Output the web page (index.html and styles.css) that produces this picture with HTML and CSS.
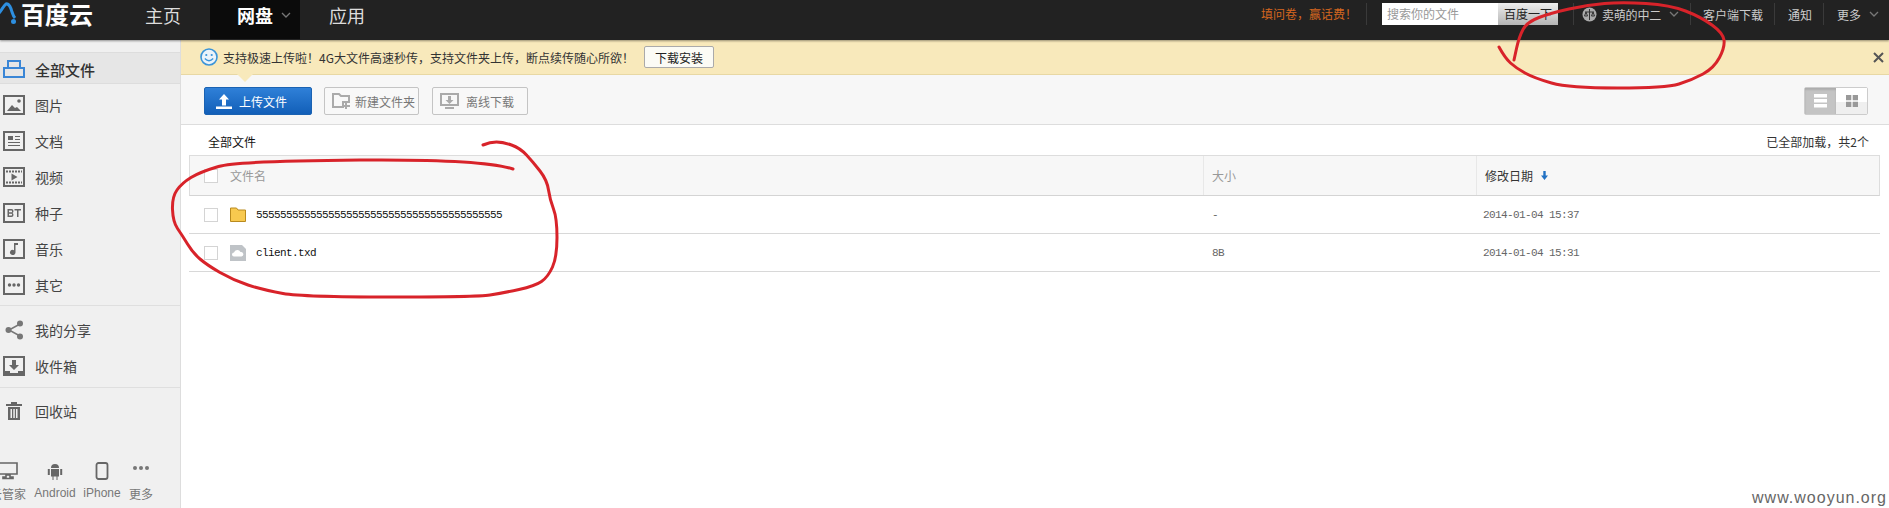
FILE: index.html
```html
<!DOCTYPE html>
<html lang="zh">
<head>
<meta charset="utf-8">
<title>百度云 网盘</title>
<link rel="stylesheet" href="styles.css">
</head>
<body>
<div class="app">
  <header class="topbar">
    <div class="logo">
      <svg class="logo-mark" width="18" height="26" viewBox="0 0 18 26"><path d="M-3 15C1 12 3 6 6 4c3-1 5 4 6 8 1 3 2 5 3 6" fill="none" stroke="#2d8fe0" stroke-width="3"/><circle cx="13.500" cy="21.500" r="2.500" fill="#2d8fe0"/></svg>
      <span class="logo-text">百度云</span>
    </div>
    <nav class="nav">
      <a class="tab tab-home">主页</a>
      <a class="tab tab-active">网盘<svg class="chev" width="10" height="6" viewBox="0 0 10 6"><path d="M1 1l4 4 4-4" fill="none" stroke="#777" stroke-width="1.300"/></svg></a>
      <a class="tab tab-apps">应用</a>
    </nav>
    <div class="top-right">
      <span class="promo">填问卷&#xFF0C;赢话费&#xFF01;</span>
      <div class="search"><span class="search-input">搜索你的文件</span><span class="search-btn">百度一下</span></div>
      <div class="top-item item-user">
        <svg width="15" height="15" viewBox="0 0 15 15"><circle cx="7.500" cy="7.500" r="7" fill="#aaa"/><path d="M7.500 2v11M3 5h9M4 5l-1.500 4h3zM11 5l-1.500 4h3z" fill="none" stroke="#333" stroke-width="1"/></svg>
        <span class="uname">卖萌的中二</span>
        <svg class="chev" width="10" height="6" viewBox="0 0 10 6"><path d="M1 1l4 4 4-4" fill="none" stroke="#777" stroke-width="1.300"/></svg>
      </div>
      <div class="top-item item-client">客户端下载</div>
      <div class="top-item item-notice">通知</div>
      <div class="top-item item-more">更多<svg class="chev" width="10" height="6" viewBox="0 0 10 6"><path d="M1 1l4 4 4-4" fill="none" stroke="#777" stroke-width="1.300"/></svg></div>
    </div>
  </header>

  <div class="main">
    <aside class="sidebar">
      <a class="side-item side-active">
        <svg class="side-ico" width="22" height="20" viewBox="0 0 22 20"><path d="M5 9V2h12v7M1 9h20v9H1z" fill="none" stroke="#3a86d6" stroke-width="2"/></svg>
        全部文件
      </a>
      <div class="side-group">
        <a class="side-item"><svg class="side-ico" width="22" height="20" viewBox="0 0 22 20"><rect x="1" y="1" width="20" height="18" fill="none" stroke="#666" stroke-width="2"/><path d="M4 16l5-6 3 3 2-1 4 4z" fill="#666"/><circle cx="16" cy="6" r="1.800" fill="#666"/></svg>图片</a>
        <a class="side-item"><svg class="side-ico" width="22" height="20" viewBox="0 0 22 20"><rect x="1" y="1" width="20" height="18" fill="none" stroke="#666" stroke-width="2"/><path d="M5 5h5v4H5zM12 5h5v1h-5zM12 8h5v1h-5zM5 11h12v1H5zM5 14h12v1H5z" fill="#666"/></svg>文档</a>
        <a class="side-item"><svg class="side-ico" width="22" height="20" viewBox="0 0 22 20"><rect x="1" y="1" width="20" height="18" fill="none" stroke="#666" stroke-width="2"/><path d="M3 4.500h16M3 15.500h16" stroke="#666" stroke-width="2" stroke-dasharray="2 1"/><path d="M8.500 6.500l6 3.500-6 3.500z" fill="#666"/></svg>视频</a>
        <a class="side-item"><svg class="side-ico" width="22" height="20" viewBox="0 0 22 20"><rect x="1" y="1" width="20" height="18" fill="none" stroke="#666" stroke-width="2"/><path d="M4.500 6h4q2 0 2 2 0 1.500-1 2 1 .5 1 2 0 2-2 2h-4zM6 7.500v1.800h2.500q.6 0 .6-.9t-.6-.9zM6 10.700v1.800h2.500q.6 0 .6-.9t-.6-.9zM11.500 6h6.500v1.500h-2.500V14H14V7.500h-2.500z" fill="#666" fill-rule="evenodd"/></svg>种子</a>
        <a class="side-item"><svg class="side-ico" width="22" height="20" viewBox="0 0 22 20"><rect x="1" y="1" width="20" height="18" fill="none" stroke="#666" stroke-width="2"/><path d="M11 4h4v2h-2.500v7.500a2.800 2.500 0 1 1-1.500-2.200z" fill="#666"/></svg>音乐</a>
        <a class="side-item"><svg class="side-ico" width="22" height="20" viewBox="0 0 22 20"><rect x="1" y="1" width="20" height="18" fill="none" stroke="#666" stroke-width="2"/><circle cx="6.500" cy="10" r="1.700" fill="#666"/><circle cx="11" cy="10" r="1.700" fill="#666"/><circle cx="15.500" cy="10" r="1.700" fill="#666"/></svg>其它</a>
      </div>
      <div class="side-group group-share">
        <a class="side-item"><svg class="side-ico" width="22" height="20" viewBox="0 0 22 20"><path d="M17 4L6 10l11 6" fill="none" stroke="#777" stroke-width="1.500"/><circle cx="17" cy="3.500" r="3" fill="#777"/><circle cx="5.500" cy="10" r="3" fill="#777"/><circle cx="17" cy="16.500" r="3" fill="#777"/></svg>我的分享</a>
        <a class="side-item"><svg class="side-ico" width="22" height="20" viewBox="0 0 22 20"><path d="M0 0h22v20H0zM2 2v13h5v2h8v-2h5V2z" fill="#666" fill-rule="evenodd"/><path d="M9 4h4v5h3l-5 5-5-5h3z" fill="#666"/></svg>收件箱</a>
      </div>
      <div class="side-group group-trash">
        <a class="side-item"><svg class="side-ico" width="22" height="20" viewBox="0 0 22 20"><path d="M8 1h6v2h5v2H3V3h5zM5 6h12v13H5zM7.500 8v9h1.500V8zM10.300 8v9h1.500V8zM13 8v9h1.500V8z" fill="#666" fill-rule="evenodd"/></svg>回收站</a>
      </div>
      <div class="side-bottom">
        <div class="b-item b-first"><svg width="20" height="18" viewBox="0 0 20 18"><path d="M1 1h18v11H1zM8 13h4v2h3v1.500H5V15h3z" fill="none" stroke="#666" stroke-width="1.600"/></svg><span>云管家</span></div>
        <div class="b-item b-android"><svg width="16" height="18" viewBox="0 0 16 18"><path d="M4 6a4 4 0 0 1 8 0zM4 7h8v7.500h-1.500V18h-1v-3.500h-3V18h-1v-3.500H4zM.8 7h2v6h-2zM13.200 7h2v6h-2z" fill="#666"/></svg><span>Android</span></div>
        <div class="b-item b-iphone"><svg width="14" height="18" viewBox="0 0 14 18"><rect x="1.500" y="1" width="11" height="16" rx="2" fill="none" stroke="#666" stroke-width="1.800"/></svg><span>iPhone</span></div>
        <div class="b-item b-more"><svg width="18" height="18" viewBox="0 0 18 18"><circle cx="3" cy="6" r="2" fill="#777"/><circle cx="9" cy="6" r="2" fill="#777"/><circle cx="15" cy="6" r="2" fill="#777"/></svg><span>更多</span></div>
      </div>
    </aside>

    <section class="content">
      <div class="notice">
        <svg width="18" height="18" viewBox="0 0 18 18"><circle cx="9" cy="9" r="8" fill="#eaf3fa" stroke="#3a94d8" stroke-width="1.600"/><circle cx="6.300" cy="7" r="1.100" fill="#3a94d8"/><circle cx="11.700" cy="7" r="1.100" fill="#3a94d8"/><path d="M4.800 10.500q4.200 4.500 8.400 0" fill="none" stroke="#3a94d8" stroke-width="1.300"/></svg>
        <span class="notice-text">支持极速上传啦&#xFF01;4G大文件高速秒传&#xFF0C;支持文件夹上传&#xFF0C;断点续传随心所欲&#xFF01;</span>
        <button class="notice-btn">下载安装</button>
        <svg class="notice-close" width="11" height="11" viewBox="0 0 11 11"><path d="M1 1l9 9M10 1l-9 9" stroke="#555" stroke-width="2"/></svg>
      </div>
      <div class="toolbar">
        <button class="btn btn-primary"><svg width="18" height="17" viewBox="0 0 18 17"><path d="M9 1l5 5.500h-3v6H7v-6H4zM1 13.500h16V16H1z" fill="#fff"/></svg>上传文件</button>
        <button class="btn btn-folder"><svg width="18" height="16" viewBox="0 0 18 16"><path d="M1 1h6l2 2h8v6h-6v5H1z" fill="none" stroke="#aaa" stroke-width="2"/><path d="M13 9h2v3h3v2h-3v2h-2v-2h-2v-2h2z" fill="#aaa"/></svg>新建文件夹</button>
        <button class="btn btn-offline"><svg width="19" height="17" viewBox="0 0 19 17"><path d="M1 1h17v11H1z" fill="none" stroke="#aaa" stroke-width="2"/><path d="M8 3h3v4h2.500l-4 4-4-4H8zM5 14h9v2H5z" fill="#aaa"/></svg>离线下载</button>
        <div class="view-toggle">
          <span class="view view-list"><svg width="13" height="14" viewBox="0 0 13 14"><path d="M0 0h13v3.500H0zM0 5h13v3.500H0zM0 10h13v3.500H0z" fill="#fff"/></svg></span>
          <span class="view view-grid"><svg width="12" height="12" viewBox="0 0 12 12"><path d="M0 0h5.300v5.300H0zM6.700 0H12v5.300H6.700zM0 6.700h5.300V12H0zM6.700 6.700H12V12H6.700z" fill="#999"/></svg></span>
        </div>
      </div>
      <div class="crumbs">
        <span class="crumb">全部文件</span>
        <span class="loaded">已全部加载&#xFF0C;共2个</span>
      </div>
      <div class="file-table">
        <div class="row row-head">
          <div class="cell cell-name"><span class="check"></span><span class="head-label">文件名</span></div>
          <div class="cell cell-size head-label">大小</div>
          <div class="cell cell-date head-dark">修改日期<svg class="sort" width="7" height="9" viewBox="0 0 7 9"><path d="M2.300 0h2.400v4.500H7L3.500 9 0 4.500h2.300z" fill="#2372c4"/></svg></div>
        </div>
        <div class="row">
          <div class="cell cell-name"><span class="check"></span>
            <svg class="file-ico" width="16" height="15" viewBox="0 0 16 15"><path d="M.5 1h6l1.500 2h7.500v11.500H.500z" fill="#f8c94f" stroke="#b98a1e"/></svg>
            <span class="fname">55555555555555555555555555555555555555555</span></div>
          <div class="cell cell-size meta">-</div>
          <div class="cell cell-date meta">2014-01-04 15:37</div>
        </div>
        <div class="row">
          <div class="cell cell-name"><span class="check"></span>
            <svg class="file-ico" width="16" height="16" viewBox="0 0 16 16"><path d="M0 0h12l4 4v12H0z" fill="#bfc3c7"/><path d="M4 11.500a2 2 0 0 1 0-4 3.500 3.500 0 0 1 6.500-.5 2.300 2.300 0 0 1 1 4.500z" fill="#fff"/></svg>
            <span class="fname">client.txd</span></div>
          <div class="cell cell-size meta">8B</div>
          <div class="cell cell-date meta">2014-01-04 15:31</div>
        </div>
      </div>
    </section>
  </div>

  <svg class="scribble" width="1889" height="508" viewBox="0 0 1889 508">
    <path d="M1499 47Q1505 58 1510.500 63T1525 73T1551.500 83T1617.500 88T1679 84T1703 74T1719.500 57.500T1724 40T1712 25T1685.500 11T1646 3.500T1604.500 3.500T1569 9T1539 17.500T1523 29.500T1516.500 48.500L1514 60"/>
    <path d="M483 145Q490 142 496.500 142T511.500 145T526.500 155T540 171T548.500 190T553.500 209T557 237.500T552.500 267T541.500 281.500T519 289.500T490 295T390 297T283 293.500T248 285T220 272.500T200 259T187.500 244T177.500 228.500T172.500 209.500T177 190T191 177.500T218.500 166.500T360 160T513 169"/>
  </svg>
  <div class="watermark">www.wooyun.org</div>
</div>
</body>
</html>
```

FILE: styles.css
```css
* { box-sizing: border-box; }
html, body { margin: 0; padding: 0; }
body { background: #fff; font-family: "Noto Sans CJK SC", "Liberation Sans", sans-serif; font-size: 12px; color: #333; }
.app { position: relative; width: 1889px; height: 508px; overflow: hidden; }

/* top bar */
.topbar { position: relative; z-index: 2; display: flex; height: 40px; background: #222; box-shadow: 0 1px 2px rgba(0,0,0,.4); }
.logo { display: flex; width: 110px; height: 39px; padding-left: 0; }
.logo-mark { margin-top: 0; flex: none; }
.logo-text { margin-left: 3px; font-size: 24px; line-height: 27px; font-weight: 700; color: #fff; letter-spacing: 0; }
.nav { display: flex; }
.tab { display: flex; align-items: center; font-size: 18px; color: #ddd; height: 39px; padding-bottom: 9px; }
.tab-home { width: 100px; padding-left: 35px; }
.tab-active { width: 90px; padding-left: 27px; background: #0b0b0b; color: #fff; font-weight: 700; }
.tab-active .chev { margin-left: 8px; }
.tab-apps { padding-left: 29px; }
.top-right { margin-left: auto; display: flex; height: 28px; align-items: center; }
.promo { width: 106px; border-right: 1px solid #3a3a3a; color: #d4661f; font-size: 12px; height: 22px; line-height: 22px; white-space: nowrap; }
.search { display: flex; width: 176px; height: 22px; margin: 0 15px; background: #fff; }
.search-input { width: 116px; padding-left: 5px; line-height: 21px; color: #999; }
.search-btn { width: 60px; line-height: 21px; text-align: center; color: #222; background: linear-gradient(#eee, #b4b4b4); }
.top-item { display: flex; align-items: center; height: 22px; border-left: 1px solid #3a3a3a; color: #ccc; white-space: nowrap; }
.item-user { width: 117px; padding-left: 8px; }
.uname { margin-left: 5px; color: #ccc; letter-spacing: -.2px; }
.item-user .chev { margin-left: 8px; }
.item-client { width: 84px; padding-left: 12px; }
.item-notice { width: 49px; padding-left: 13px; }
.item-more { width: 66px; padding-left: 13px; }
.item-more .chev { margin-left: 8px; }

/* layout */
.main { display: flex; height: 468px; }
.sidebar { display: flex; flex-direction: column; flex: none; width: 181px; padding-top: 12px; background: #f0f0f0; border-right: 1px solid #ddd; }
.side-item { display: flex; align-items: center; height: 36px; padding-left: 3px; font-size: 14px; color: #444; }
.side-ico { flex: none; margin-right: 10px; }
.side-active { height: 32px; margin-bottom: 3px; background: #e6e6e6; border-top: 1px solid #ddd; border-bottom: 1px solid #ddd; font-size: 15px; font-weight: 500; color: #333; padding-top: 2px; }
.side-group { border-bottom: 1px solid #dfdfdf; padding-bottom: 2px; }
.group-share { padding: 6px 0 3px; }
.group-trash { padding-top: 5px; border-bottom: 0; }
.side-bottom { margin-top: auto; display: flex; gap: 8px; margin-left: -10px; padding-bottom: 7px; color: #777; }
.b-item { display: flex; flex-direction: column; align-items: center; gap: 6px; white-space: nowrap; line-height: 15px; }
.b-first { width: 36px; }
.b-android { width: 42px; font-family: "Liberation Sans", sans-serif; }
.b-iphone { width: 36px; font-family: "Liberation Sans", sans-serif; }
.b-more { width: 26px; }
.content { flex: 1; min-width: 0; }

/* notice */
.notice { position: relative; display: flex; align-items: center; height: 35px; padding-left: 19px; background: #f8e9bb; border-bottom: 1px solid #e8d8a4; }
.notice::after { content: ""; position: absolute; left: 56px; top: 34px; border: 8px solid transparent; border-top-color: #f8e9bb; border-bottom: 0; z-index: 1; }
.notice-text { margin-left: 5px; color: #333; white-space: nowrap; }
.notice-btn { width: 70px; height: 22px; margin-left: 10px; padding: 0; background: #fbfbf5; border: 1px solid #aaa; border-radius: 2px; font: inherit; color: #222; }
.notice-close { margin-left: auto; margin-right: 5px; }

/* toolbar */
.toolbar { display: flex; align-items: flex-start; height: 50px; padding: 12px 21px 0 23px; background: #f7f7f7; border-bottom: 1px solid #ddd; }
.btn { display: flex; align-items: center; height: 28px; padding: 0; border: 1px solid #c4c4c4; border-radius: 2px; background: #f8f8f8; font: inherit; color: #777; }
.btn-primary { width: 108px; padding-left: 10px; background: linear-gradient(#2f80d8, #125fb8); border-color: #1a62b2; color: #fff; }
.btn-primary svg { margin-right: 6px; }
.btn-folder { width: 95px; margin-left: 12px; padding-left: 7px; }
.btn-folder svg { margin-right: 5px; }
.btn-offline { width: 96px; margin-left: 13px; padding-left: 7px; }
.btn-offline svg { margin-right: 7px; }
.view-toggle { display: flex; margin-left: auto; height: 28px; border: 1px solid #ccc; border-radius: 2px; }
.view { display: flex; align-items: center; justify-content: center; width: 31px; }
.view-list { background: #c4c4c4; box-shadow: inset 0 2px 2px rgba(0,0,0,.12); }
.view-grid { background: linear-gradient(#fff 55%, #efefef 55%); }

/* file list */
.crumbs { display: flex; justify-content: space-between; align-items: center; height: 30px; padding: 2px 20px 0 27px; }
.crumb { color: #111; }
.loaded { color: #333; }
.file-table { margin: 0 9px 0 8px; }
.row { display: grid; grid-template-columns: 1014px 274px 1fr; height: 38px; border-bottom: 1px solid #d8d8d8; }
.row-head { grid-template-columns: 1013px 273px 1fr; height: 41px; background: #f7f7f7; border: 1px solid #ddd; border-bottom-color: #d4d4d4; }
.cell { display: flex; align-items: center; }
.cell-name { padding-left: 15px; }
.row-head .cell-name { padding-left: 14px; }
.cell-size { padding-left: 8px; border-left: 1px solid transparent; }
.cell-date { padding-left: 6px; }
.row-head .cell-date { padding-left: 8px; }
.row-head .cell-size, .row-head .cell-date { border-left: 1px solid #e8e8e8; }
.check { flex: none; width: 14px; height: 14px; margin-right: 12px; background: #fff; border: 1px solid #d4d4d4; }
.head-label { color: #999; }
.head-dark { color: #333; }
.sort { margin-left: 8px; }
.file-ico { flex: none; margin-right: 10px; }
.fname { font-family: "Liberation Mono", monospace; font-size: 11px; letter-spacing: -.6px; color: #111; }
.meta { font-family: "Liberation Mono", monospace; font-size: 11px; letter-spacing: -.6px; color: #666; }

/* overlays */
.scribble { position: absolute; left: 0; top: 0; pointer-events: none; z-index: 3; }
.scribble path { fill: none; stroke: #d8232a; stroke-width: 3; stroke-linecap: round; stroke-linejoin: round; }
.watermark { position: absolute; right: 2px; bottom: 1px; font-family: "Liberation Sans", sans-serif; font-size: 16px; letter-spacing: 1px; color: #666; z-index: 3; }
```
